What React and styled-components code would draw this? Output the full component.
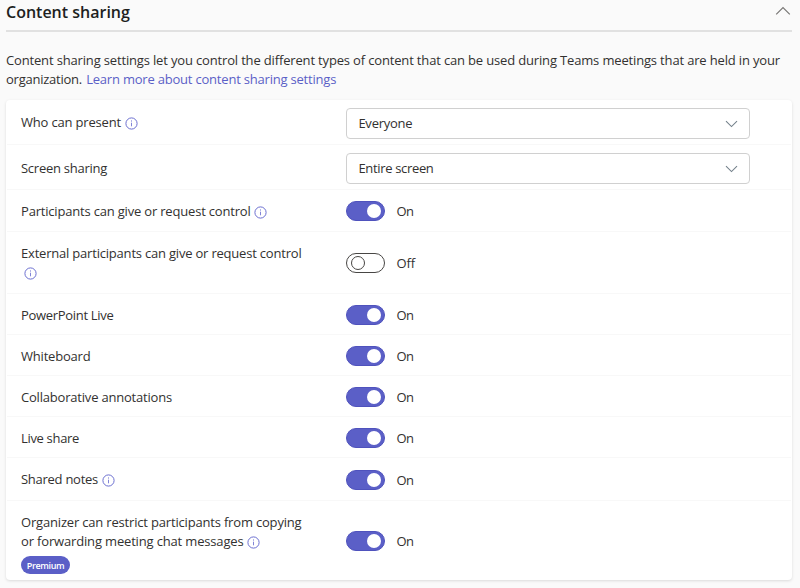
import React from 'react';
import styled, { createGlobalStyle } from 'styled-components';

const GlobalStyle = createGlobalStyle`
  * { box-sizing: border-box; }
  body {
    margin: 0;
    height: 588px;
    overflow: hidden;
    background: #fafafa;
    color: #323130;
    font: 13px/19px "Open Sans", "Noto Sans", sans-serif;
  }
`;

const Page = styled.main`
  display: flex;
  flex-direction: column;
  width: 800px;
  height: 588px;
  padding: 0 8px 0 6px;
`;

const Header = styled.header`
  display: flex;
  justify-content: space-between;
  height: 32px;
  padding-right: 1px;
  border-bottom: 2px solid #e1e1e1;
`;

const Title = styled.h2`
  margin: 0;
  font-size: 16px;
  font-weight: 600;
  line-height: 24px;
  color: #201f1e;
`;

const CollapseIcon = styled.svg`
  width: 16px;
  height: 10px;
  margin-top: 6px;
  fill: none;
  stroke: #797775;
  stroke-width: 1.2;
`;

const Description = styled.p`
  margin: 19px 0 11px;
  white-space: nowrap;
`;

const Text = styled.span`
  white-space: nowrap;
  letter-spacing: ${(p) => p.$spacing || 0}px;
`;

const Link = styled.a`
  margin-left: 1px;
  color: #5b5fc7;
  letter-spacing: -0.205px;
  text-decoration: none;
`;

const Card = styled.section`
  display: flex;
  flex-direction: column;
  height: 480px;
  border-radius: 4px;
  background: #fff;
  box-shadow: 0 1px 3px rgba(0, 0, 0, 0.13);
`;

const Row = styled.div`
  display: grid;
  grid-template-columns: 325.4px 404px;
  height: ${(p) => p.$height}px;
  margin: 0 1px;
  padding-left: 14px;
  border-bottom: 1px solid #f8f8f8;

  &:last-child { border-bottom: 0; }
`;

const Label = styled.div`
  padding-top: ${(p) => p.$top}px;
`;

const LabelLine = styled.div`
  display: flex;
  align-items: center;
  height: 19px;
`;

const Info = styled.svg`
  flex: none;
  width: 13px;
  height: 13px;
  margin: 2px 0 0 ${(p) => p.$gap}px;
  fill: none;
  stroke: #6b6fd0;
`;

const Control = styled.div`
  display: flex;
  align-items: flex-start;
  padding-top: ${(p) => p.$top}px;
`;

const Select = styled.div`
  display: flex;
  align-items: center;
  justify-content: space-between;
  width: 404px;
  height: 31px;
  padding: 0 11px;
  border: 1px solid #d0d0d0;
  border-radius: 4px;
  background: #fff;
`;

const SelectIcon = styled.svg`
  width: 13px;
  height: 8px;
  margin-top: 1px;
  fill: none;
  stroke: #75828c;
  stroke-width: 1.1;
`;

const Switch = styled.span`
  display: flex;
  align-items: center;
  justify-content: ${(p) => (p.$on ? 'flex-end' : 'flex-start')};
  width: 39px;
  height: 20px;
  padding: 0 ${(p) => (p.$on ? 3 : 4)}px;
  border: 1px solid ${(p) => (p.$on ? '#4f52bd' : '#484644')};
  border-radius: 10px;
  background: ${(p) => (p.$on ? '#5b5fc7' : '#fff')};
`;

const Knob = styled.span`
  width: 14px;
  height: 14px;
  border: ${(p) => (p.$on ? '0' : '1.3px solid #484644')};
  border-radius: 50%;
  background: #fff;
`;

const State = styled.span`
  margin-left: 11px;
  line-height: 20px;
  letter-spacing: ${(p) => (p.$on ? -0.4 : -0.12)}px;
`;

const Badge = styled.span`
  display: flex;
  align-items: center;
  justify-content: center;
  width: 49px;
  height: 18px;
  margin-top: 5px;
  padding-top: 1px;
  border-radius: 9px;
  background: #5b5fc7;
  color: #fff;
  font-size: 9px;
  font-weight: 600;
  line-height: 15px;
  letter-spacing: -0.35px;
`;

const settings = [
  { height: 45, top: 13, controlTop: 8, select: 'Everyone', selectSpacing: -0.24,
    lines: [{ text: 'Who can present', spacing: -0.176, info: 3.5 }] },
  { height: 45, top: 14, controlTop: 8, select: 'Entire screen', selectSpacing: -0.33,
    lines: [{ text: 'Screen sharing', spacing: -0.26 }] },
  { height: 42, top: 12, controlTop: 11, on: true,
    lines: [{ text: 'Participants can give or request control', spacing: -0.189, info: 3 }] },
  { height: 62, top: 12, controlTop: 21, on: false,
    lines: [
      { text: 'External participants can give or request control', spacing: -0.201 },
      { info: 3 },
    ] },
  { height: 41, top: 12, controlTop: 11, on: true,
    lines: [{ text: 'PowerPoint Live', spacing: -0.306 }] },
  { height: 41, top: 12, controlTop: 11, on: true,
    lines: [{ text: 'Whiteboard', spacing: -0.196 }] },
  { height: 41, top: 12, controlTop: 11, on: true,
    lines: [{ text: 'Collaborative annotations', spacing: -0.198 }] },
  { height: 41, top: 12, controlTop: 11, on: true,
    lines: [{ text: 'Live share', spacing: -0.324 }] },
  { height: 43, top: 12, controlTop: 12, on: true,
    lines: [{ text: 'Shared notes', spacing: -0.266, info: 3.5 }] },
  { height: 79, top: 12, controlTop: 30, on: true, badge: 'Premium',
    lines: [
      { text: 'Organizer can restrict participants from copying', spacing: -0.18 },
      { text: 'or forwarding meeting chat messages', spacing: -0.162, info: 3 },
    ] },
];

function InfoIcon({ gap }) {
  return (
    <Info $gap={gap} viewBox="0 0 13 13">
      <circle cx="6.5" cy="6.5" r="5.6" />
      <path d="M6.5 5.7v3.6M6.5 3.4v1.2" strokeOpacity="0.85" />
    </Info>
  );
}

function SettingRow({ setting }) {
  return (
    <Row $height={setting.height}>
      <Label $top={setting.top}>
        {setting.lines.map((line, i) => (
          <LabelLine key={i}>
            {line.text && <Text $spacing={line.spacing}>{line.text}</Text>}
            {line.info && <InfoIcon gap={line.info} />}
          </LabelLine>
        ))}
        {setting.badge && <Badge>{setting.badge}</Badge>}
      </Label>
      <Control $top={setting.controlTop}>
        {setting.select ? (
          <Select>
            <Text $spacing={setting.selectSpacing}>{setting.select}</Text>
            <SelectIcon viewBox="0 0 13 8">
              <path d="M1 1.2l5.5 5.4L12 1.2" />
            </SelectIcon>
          </Select>
        ) : (
          <>
            <Switch $on={setting.on}><Knob $on={setting.on} /></Switch>
            <State $on={setting.on}>{setting.on ? 'On' : 'Off'}</State>
          </>
        )}
      </Control>
    </Row>
  );
}

export default function App() {
  return (
    <>
      <GlobalStyle />
      <Page>
        <Header>
          <Title>Content sharing</Title>
          <CollapseIcon viewBox="0 0 16 10">
            <path d="M1.2 8.3L8 1.5l6.8 6.8" />
          </CollapseIcon>
        </Header>
        <Description>
          <Text $spacing={-0.159}>
            Content sharing settings let you control the different types of content that can be used during Teams meetings that are held in your
          </Text>
          <br />
          <Text $spacing={-0.239}>organization. </Text>
          <Link>Learn more about content sharing settings</Link>
        </Description>
        <Card>
          {settings.map((s) => (
            <SettingRow key={s.lines[0].text} setting={s} />
          ))}
        </Card>
      </Page>
    </>
  );
}
